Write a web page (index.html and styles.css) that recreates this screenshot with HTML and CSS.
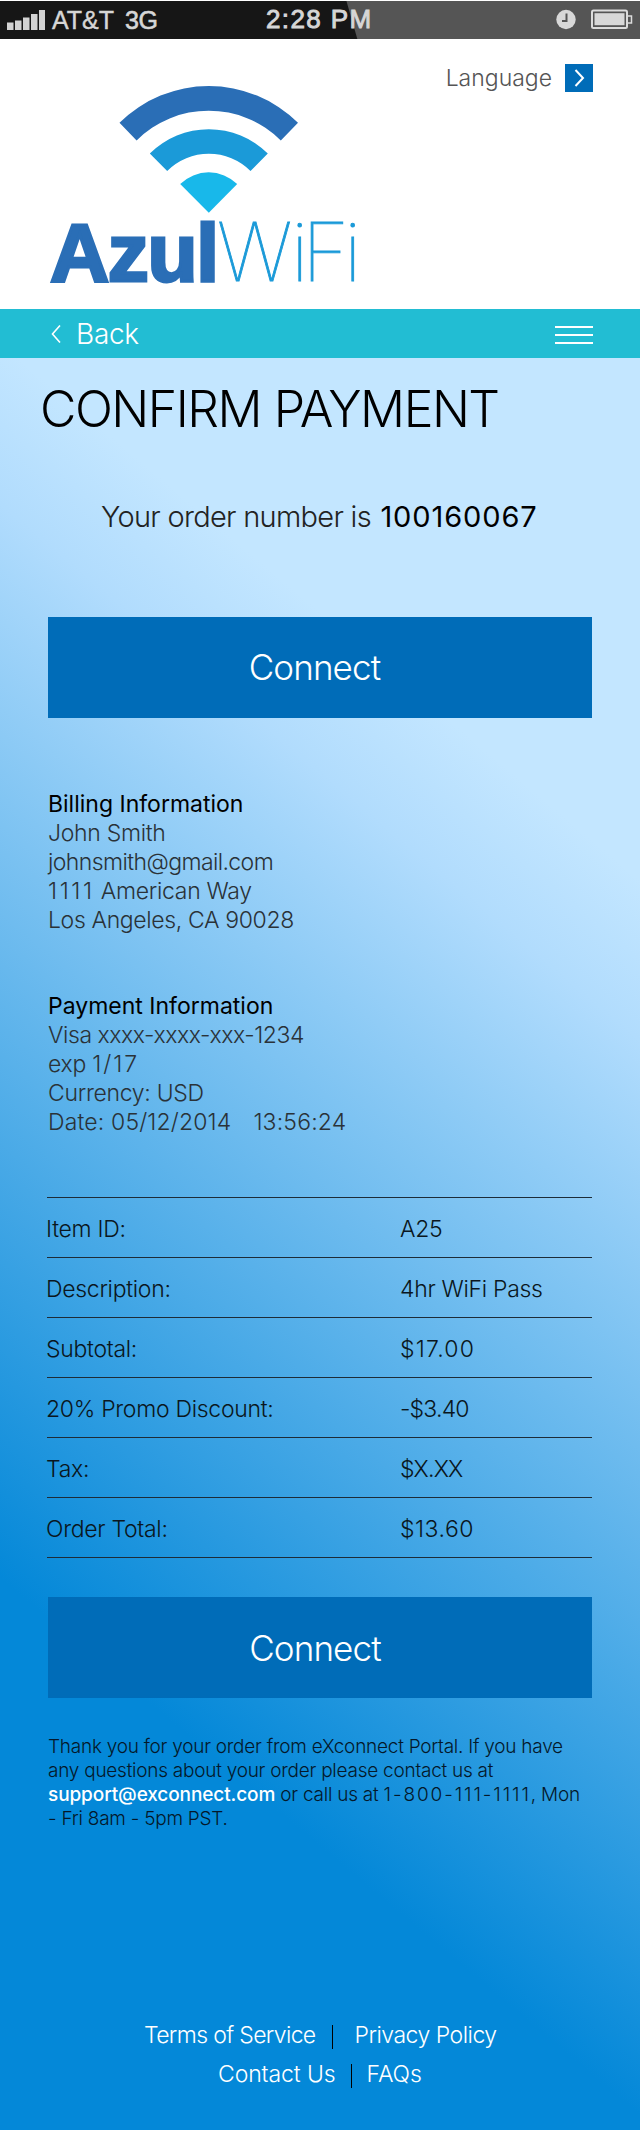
FILE: index.html
```html
<!DOCTYPE html>
<html lang="en">
<head>
<meta charset="utf-8">
<title>Confirm Payment</title>
<link rel="stylesheet" href="styles.css">
</head>
<body>
<div class="page">
  <div class="status">
    <div class="carrier">
      <svg class="signal" width="38" height="22" viewBox="0 0 38 22"><path d="M0 13.500h6.500V21H0zM8 11.500h6.500V21H8zM16 8.500h6.500V21h-6.500zM24 5h6.500v16h-6.500zM32 1h6v20h-6z" fill="#d2d2d2"/></svg>
      <span class="operator">AT&amp;T</span><span class="network">3G</span>
    </div>
    <span class="clock">2:28 PM</span>
    <svg class="indicators" width="77" height="22" viewBox="0 0 77 22">
      <circle cx="10" cy="10.500" r="9.700" fill="#d8d8d8"/>
      <path d="M10.500 4.500V12H6" fill="none" stroke="#555" stroke-width="2"/>
      <rect x="36" y="1.500" width="35" height="17.500" rx="1.500" fill="none" stroke="#dcdcdc" stroke-width="2"/>
      <rect x="38.500" y="4.200" width="30" height="12" fill="#d8d8d8"/>
      <path d="M72 7h3.500v7H72" fill="none" stroke="#dcdcdc" stroke-width="1.500"/>
    </svg>
  </div>

  <header class="header">
    <svg class="logo" width="320" height="214" viewBox="48 80 320 214">
      <path d="M119.500 122.800A126.700 126.700 0 0 1 298 122.800L280.800 140.500A102 102 0 0 0 136.600 140.500Z" fill="#2a6eb6"/>
      <path d="M149.800 153.600A83.700 83.700 0 0 1 267.800 153.600L250.500 171A59 59 0 0 0 167.200 171Z" fill="#1b9ad8"/>
      <path d="M180.200 184A40.700 40.700 0 0 1 237.200 184L208.800 212.800Z" fill="#18b8ea"/>
      <text class="logo-azul" x="50" y="280.500" textLength="169">Azul</text>
      <text class="logo-wifi" x="217 291 302 344" y="281">WiFi</text>
    </svg>
    <div class="language">
      <span>Language</span>
      <svg width="28" height="28" viewBox="0 0 28 28"><rect width="28" height="28" fill="#006cb8"/><path d="M10.500 6l7.500 8-7.500 8" fill="none" stroke="#fff" stroke-width="2"/></svg>
    </div>
  </header>

  <nav class="nav">
    <div class="back">
      <svg width="10" height="18" viewBox="0 0 10 18"><path d="M9 .5L1.500 9 9 17.500" fill="none" stroke="#fff" stroke-width="1.600"/></svg>
      <span>Back</span>
    </div>
    <div class="menu"><i></i><i></i><i></i></div>
  </nav>

  <main>
    <h1>CONFIRM PAYMENT</h1>
    <p class="order">Your order number is <b>100160067</b></p>
    <div class="button">Connect</div>

    <section class="info billing">
      <h2>Billing Information</h2>
      <p>John Smith</p>
      <p class="email">johnsmith@gmail.com</p>
      <p><span class="house">1111</span> American Way</p>
      <p class="city">Los Angeles, CA 90028</p>
    </section>

    <section class="info payment">
      <h2>Payment Information</h2>
      <p class="card">Visa xxxx-xxxx-xxx-1234</p>
      <p>exp <span class="expiry">1/17</span></p>
      <p>Currency: USD</p>
      <p class="date"><span>Date: 05/12/2014</span><span>13:56:24</span></p>
    </section>

    <div class="table">
      <div class="row"><span>Item ID:</span><span>A25</span></div>
      <div class="row"><span>Description:</span><span>4hr WiFi Pass</span></div>
      <div class="row"><span>Subtotal:</span><span class="loose">$17.00</span></div>
      <div class="row"><span>20% Promo Discount:</span><span class="snug">-$3.40</span></div>
      <div class="row"><span>Tax:</span><span class="snug">$X.XX</span></div>
      <div class="row"><span>Order Total:</span><span class="total">$13.60</span></div>
    </div>

    <div class="button button-lower">Connect</div>

    <p class="thanks">Thank you for your order from eXconnect Portal. If you have<br>any questions about your order please contact us at<br><b>support@exconnect.com</b> or call us at <span class="phone">1-800-111-1111</span>, Mon<br>- Fri 8am - 5pm PST.</p>
  </main>

  <footer class="footer">
    <div class="links links-top"><span>Terms of Service</span><i></i><span>Privacy Policy</span></div>
    <div class="links links-bottom"><span>Contact Us</span><i></i><span>FAQs</span></div>
  </footer>
</div>
</body>
</html>
```
FILE: styles.css
```css
* { box-sizing: border-box; }
body, h1, h2, p { margin: 0; }
.page {
  width: 640px;
  height: 2130px;
  background: linear-gradient(220deg, #c3e6ff 33%, #b1dcfd 39%, #0488d8 79.300%);
  font-family: Inter, "Liberation Sans", sans-serif;
  font-weight: 300;
  white-space: nowrap;
  overflow: hidden;
}
.status {
  height: 39px;
  border-top: 1px solid #fff;
  padding: 0 7px;
  display: grid;
  grid-template-columns: 259px 1fr auto;
  align-items: center;
  color: #d6d6d6;
  font-family: "Liberation Sans", sans-serif;
  background: linear-gradient(74deg, #161616 0 343px, #555 344px);
}
.carrier { display: flex; align-items: center; }
.operator { margin-left: 7px; font-size: 25px; font-weight: 400; -webkit-text-stroke: .4px; }
.network { margin-left: 11px; font-size: 25px; font-weight: 400; -webkit-text-stroke: .6px; letter-spacing: -.5px; }
.clock { font-size: 26px; font-weight: 400; -webkit-text-stroke: .9px; letter-spacing: 1.4px; padding-bottom: 1px; }

.header {
  height: 270px;
  background: #fff;
  display: flex;
  justify-content: space-between;
  padding: 25px 47px 0 48px;
}
.logo { margin-top: 16px; overflow: visible; }
.logo-azul { font: 700 82px "Liberation Sans", sans-serif; fill: #2a6eb6; stroke: #2a6eb6; stroke-width: 3px; }
.logo-wifi { font: 100 81px Inter, sans-serif; fill: #1b9ad8; stroke: #1b9ad8; stroke-width: .9px; }
.language { height: 28px; display: flex; align-items: center; gap: 13px; font-size: 23px; color: #555; }

.nav {
  height: 49px;
  background: #22bdd3;
  color: #fff;
  display: flex;
  align-items: center;
  justify-content: space-between;
  padding: 0 47px 0 51px;
}
.back { display: flex; align-items: center; gap: 15px; font-size: 28px; letter-spacing: -.3px; }
.menu { width: 38px; display: grid; gap: 6px; padding-top: 2px; }
.menu i { height: 2px; background: #fff; }

main { padding: 21px 48px 0; }
h1 { margin-left: -8px; font-size: 50px; line-height: 60px; font-weight: 300; letter-spacing: -1.500px; color: #000; }
.order { margin: 58px 0 0 53px; font-size: 29px; line-height: 40px; letter-spacing: -.7px; color: #222; }
.order b { margin-left: 2px; font-weight: 400; color: #000; letter-spacing: .9px; }
.button {
  height: 101px;
  margin-top: 80px;
  padding: 0 11px 2px 0;
  background: #006cb8;
  color: #fff;
  font-size: 35px;
  letter-spacing: -.9px;
  display: flex;
  align-items: center;
  justify-content: center;
}
.info { font-size: 23px; line-height: 28.900px; letter-spacing: -.3px; color: #2a3238; }
.info h2 { font-size: 23px; font-weight: 400; letter-spacing: 0; color: #000; }
.billing { margin-top: 72px; }
.payment { margin-top: 57.500px; }
.email { letter-spacing: -.6px; }
.house { letter-spacing: 2.600px; }
.city { letter-spacing: -.36px; }
.card { letter-spacing: -.45px; }
.expiry { letter-spacing: 2px; }
.date { display: flex; gap: 22px; letter-spacing: .15px; }

.table { margin: 60px 0 0 -1px; border-top: 1px solid #1d2c38; font-size: 23px; letter-spacing: -.3px; color: #0a1620; }
.row {
  height: 60px;
  padding-top: 4px;
  border-bottom: 1px solid #1d2c38;
  display: grid;
  grid-template-columns: 353px 1fr;
  align-items: center;
}
.row span:first-child { margin-left: -1px; }
.loose { letter-spacing: 1.200px; }
.total { letter-spacing: .5px; }
.snug { letter-spacing: -.8px; }
.button-lower { margin-top: 39px; padding: 1px 10px 0 0; }
.thanks { margin-top: 37px; font-size: 19px; line-height: 24.200px; letter-spacing: -.25px; color: #04182a; }
.thanks b { color: #fff; font-weight: 500; letter-spacing: -.1px; }
.phone { letter-spacing: 1.900px; }

.footer { margin-top: 185px; color: #fff; font-size: 23px; line-height: 39px; }
.links { display: flex; align-items: center; letter-spacing: -.65px; }
.links i { width: 1px; height: 24px; background: #000; margin-top: 2px; }
.links-top { padding-left: 144px; gap: 16px; }
.links-top span:last-child { margin-left: 6px; letter-spacing: -.5px; }
.links-bottom { padding-left: 218px; gap: 15px; letter-spacing: -.1px; }
```
